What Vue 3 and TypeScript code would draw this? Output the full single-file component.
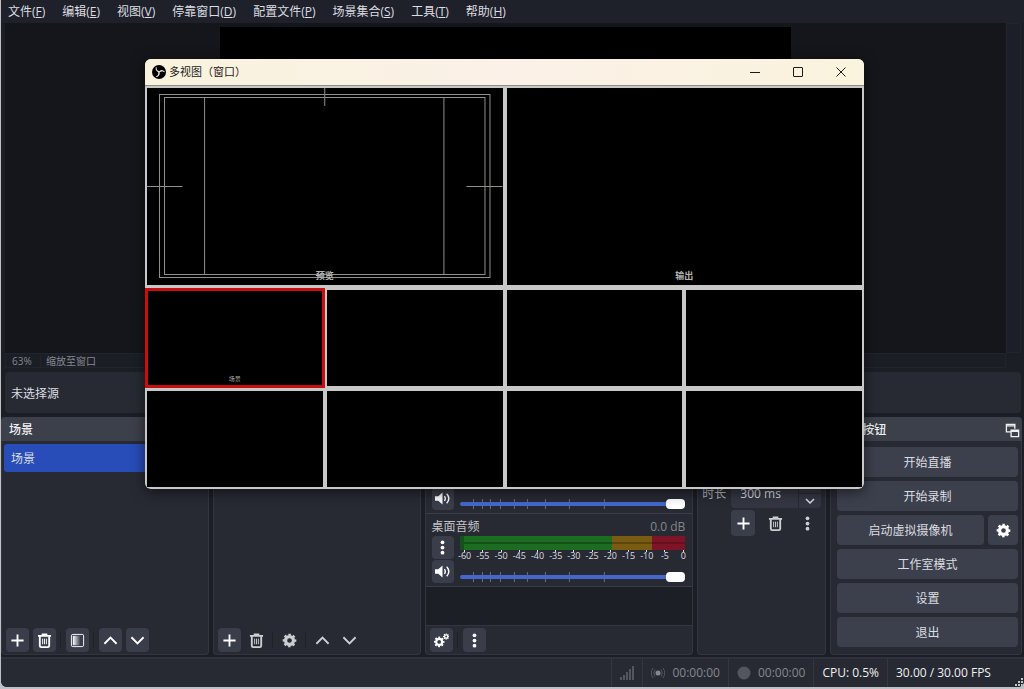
<script setup lang="ts">
import { ref } from 'vue'

interface Channel {
  id: string
  label: string
  full: boolean
}

const menus: [string, string][] = [
  ['文件', 'F'],
  ['编辑', 'E'],
  ['视图', 'V'],
  ['停靠窗口', 'D'],
  ['配置文件', 'P'],
  ['场景集合', 'S'],
  ['工具', 'T'],
  ['帮助', 'H'],
]

const channels: Channel[] = [
  { id: 'aux', label: '', full: false },
  { id: 'desktop', label: '桌面音频', full: true },
]

const scale = [-60, -55, -50, -45, -40, -35, -30, -25, -20, -15, -10, -5, 0]
const faderMarks = [13, 22, 30, 40, 54, 67, 85, 109, 144]
const volumes = ref<Record<string, number>>({ aux: 100, desktop: 100 })
const duration = ref('300 ms')
</script>

<template>
  <div class="desktop">
    <div class="app">
      <nav class="menubar">
        <button v-for="[name, key] in menus" :key="key" type="button">{{ name }}(<u>{{ key }}</u>)</button>
      </nav>

      <main class="preview">
        <div class="stage"><div class="canvas"></div></div>
        <div class="vscroll"></div>
      </main>
      <div class="zoombar">
        <span class="percent">63%</span>
        <select aria-label="缩放"><option>缩放至窗口</option></select>
      </div>

      <section class="sourcebar">未选择源</section>

      <div class="docks">
        <section class="dock">
          <h2>场景</h2>
          <div class="body">
            <ul class="scenes"><li>场景</li></ul>
            <div class="toolbar">
              <button type="button" aria-label="添加场景"><svg viewBox="0 0 16 16"><path d="M8 1.500v13M1.500 8h13" class="line" /></svg></button>
              <button type="button" aria-label="删除场景"><svg viewBox="0 0 16 16"><path d="M1 3h14M5 1.500h6M3 4v9.500q0 1.500 1.500 1.500h7q1.500 0 1.500-1.500V4" class="line" /><path d="M6 6v6M8 6v6M10 6v6" class="thin" /></svg></button>
              <i></i>
              <button type="button" aria-label="场景滤镜">
                <svg viewBox="0 0 16 16">
                  <defs><linearGradient id="fade"><stop offset="0" stop-color="#fff" /><stop offset="1" stop-color="#3c404d" /></linearGradient></defs>
                  <rect x="1.500" y="1.500" width="13" height="13" rx="1.500" class="thin" /><rect x="3" y="3" width="8" height="10" fill="url(#fade)" />
                </svg>
              </button>
              <i></i>
              <button type="button" aria-label="上移场景"><svg viewBox="0 0 16 16"><path d="M1.500 11.500L8 5l6.500 6.500" class="line" /></svg></button>
              <button type="button" aria-label="下移场景"><svg viewBox="0 0 16 16"><path d="M1.500 4.500L8 11l6.500-6.500" class="line" /></svg></button>
            </div>
          </div>
        </section>

        <section class="dock">
          <h2></h2>
          <div class="body">
            <div class="grow"></div>
            <div class="toolbar">
              <button type="button" aria-label="添加源"><svg viewBox="0 0 16 16"><path d="M8 1.500v13M1.500 8h13" class="line" /></svg></button>
              <button type="button" class="flat" aria-label="删除源"><svg viewBox="0 0 16 16"><path d="M1 3h14M5 1.500h6M3 4v9.500q0 1.500 1.500 1.500h7q1.500 0 1.500-1.500V4" class="line" /><path d="M6 6v6M8 6v6M10 6v6" class="thin" /></svg></button>
              <i></i>
              <button type="button" class="flat" aria-label="源属性"><svg viewBox="0 0 16 16"><circle cx="8" cy="8" r="4.200" class="ring" /><circle cx="8" cy="8" r="6" class="teeth" pathLength="16" /></svg></button>
              <i></i>
              <button type="button" class="flat" aria-label="上移源"><svg viewBox="0 0 16 16"><path d="M1.500 11.500L8 5l6.500 6.500" class="line" /></svg></button>
              <button type="button" class="flat" aria-label="下移源"><svg viewBox="0 0 16 16"><path d="M1.500 4.500L8 11l6.500-6.500" class="line" /></svg></button>
            </div>
          </div>
        </section>

        <section class="dock mixer">
          <h2></h2>
          <div class="body">
            <div v-for="c in channels" :key="c.id" class="channel">
              <template v-if="c.full">
                <div class="chead"><label :for="c.id">{{ c.label }}</label><span>0.0 dB</span></div>
                <div class="crow">
                  <button type="button" aria-label="音频选项"><svg viewBox="0 0 16 16"><circle cx="8" cy="2.500" r="2" /><circle cx="8" cy="8" r="2" /><circle cx="8" cy="13.500" r="2" /></svg></button>
                  <div class="meterbox">
                    <div class="meter"><b></b><b></b><b></b></div>
                    <div class="scale"><span v-for="n in scale" :key="n">{{ n }}</span></div>
                  </div>
                </div>
              </template>
              <div class="crow">
                <button type="button" aria-label="静音">
                  <svg viewBox="0 0 16 16"><path d="M0 5.500h3.500L8 1.500v13L3.500 10.500H0z" /><path d="M10 5.500q2 2.500 0 5M12.500 3q4.500 5 0 10" class="arc" /></svg>
                </button>
                <div class="fader">
                  <svg viewBox="0 0 226 10" preserveAspectRatio="none"><path v-for="m in faderMarks" :key="m" :d="`M${m + 0.5} 0v10`" /></svg>
                  <input :id="c.id" v-model="volumes[c.id]" type="range" min="0" max="100" aria-label="音量" />
                </div>
              </div>
            </div>
            <div class="empty"></div>
            <div class="toolbar">
              <button type="button" aria-label="高级音频属性">
                <svg viewBox="0 0 16 16">
                  <circle cx="5.500" cy="9.500" r="3.200" class="ring mid" /><circle cx="5.500" cy="9.500" r="4.500" class="teeth mid" pathLength="16" />
                  <circle cx="13" cy="3.800" r="1.800" class="ring small" /><circle cx="13" cy="3.800" r="2.600" class="teeth small" pathLength="16" />
                </svg>
              </button>
              <i></i>
              <button type="button" aria-label="混音器菜单"><svg viewBox="0 0 16 16"><circle cx="8" cy="2.500" r="2" /><circle cx="8" cy="8" r="2" /><circle cx="8" cy="13.500" r="2" /></svg></button>
            </div>
          </div>
        </section>

        <section class="dock">
          <h2></h2>
          <div class="body transitions">
            <div class="duration">
              <label for="duration">时长</label>
              <div class="spin">
                <input id="duration" v-model="duration" type="text" />
                <div class="steps">
                  <button type="button" aria-label="增加"></button>
                  <button type="button" aria-label="减少"><svg viewBox="0 0 10 10"><path d="M1 3l4 4 4-4" class="line" /></svg></button>
                </div>
              </div>
            </div>
            <div class="tools">
              <button type="button" aria-label="添加转场"><svg viewBox="0 0 16 16"><path d="M8 1.500v13M1.500 8h13" class="line" /></svg></button>
              <button type="button" class="flat" aria-label="删除转场"><svg viewBox="0 0 16 16"><path d="M1 3h14M5 1.500h6M3 4v9.500q0 1.500 1.500 1.500h7q1.500 0 1.500-1.500V4" class="line" /><path d="M6 6v6M8 6v6M10 6v6" class="thin" /></svg></button>
              <button type="button" class="flat" aria-label="转场菜单"><svg viewBox="0 0 16 16"><circle cx="8" cy="2.500" r="2" /><circle cx="8" cy="8" r="2" /><circle cx="8" cy="13.500" r="2" /></svg></button>
            </div>
          </div>
        </section>

        <section class="dock">
          <h2>
            控制按钮
            <button type="button" class="float" aria-label="浮动">
              <svg viewBox="0 0 16 16"><path d="M6 9.500H1.500v-8h9V6M1 3h10M6.500 7.500h8v7h-8zM6 9h9" class="line" /></svg>
            </button>
          </h2>
          <div class="body controls">
            <button type="button">开始直播</button>
            <button type="button">开始录制</button>
            <div class="pair">
              <button type="button">启动虚拟摄像机</button>
              <button type="button" class="cfg" aria-label="虚拟摄像机设置"><svg viewBox="0 0 16 16"><circle cx="8" cy="8" r="4.200" class="ring" /><circle cx="8" cy="8" r="6" class="teeth" pathLength="16" /></svg></button>
            </div>
            <button type="button">工作室模式</button>
            <button type="button">设置</button>
            <button type="button">退出</button>
          </div>
        </section>
      </div>

      <footer class="status">
        <div><svg class="dim" viewBox="0 0 14 14"><path d="M0 11h2v3H0zM3 9h2v5H3zM6 6h2v8H6zM9 3h2v11H9zM12 0h2v14h-2z" /></svg></div>
        <div class="off">
          <svg class="dim" viewBox="0 0 14 14"><circle cx="7" cy="7" r="2.500" fill="#85878e" /><path d="M4 3.500q-2.500 3.500 0 7M10 3.500q2.500 3.500 0 7M2 2q-3.500 5 0 10M12 2q3.500 5 0 10" class="wave" /></svg>
          00:00:00
        </div>
        <div class="off"><svg class="dim" viewBox="0 0 14 14"><circle cx="7" cy="7" r="6.500" /></svg>00:00:00</div>
        <div>CPU: 0.5%</div>
        <div class="fps">
          30.00 / 30.00 FPS
          <svg class="grip" viewBox="0 0 9 9"><path d="M7 1h2v2H7zM4 4h2v2H4zM7 4h2v2H7zM1 7h2v2H1zM4 7h2v2H4zM7 7h2v2H7z" /></svg>
        </div>
      </footer>
    </div>

    <section class="window" aria-label="多视图">
      <header>
        <svg class="logo" viewBox="0 0 28 28">
          <circle cx="14" cy="14" r="14" />
          <g v-for="a in [0, 120, 240]" :key="a" :transform="`rotate(${a} 14 14)`">
            <path d="M14 13Q7 12 8.500 4.500" />
            <path d="M8.500 9Q11 14.500 14 13" />
          </g>
        </svg>
        <h1>多视图（窗口）</h1>
        <button type="button" aria-label="最小化"><svg viewBox="0 0 10 10"><path d="M0 5.500h10" /></svg></button>
        <button type="button" aria-label="最大化"><svg viewBox="0 0 10 10"><rect x="0.500" y="0.500" width="9" height="9" rx="0.500" /></svg></button>
        <button type="button" aria-label="关闭"><svg viewBox="0 0 10 10"><path d="M0.500 0.500l9 9M9.500 0.500l-9 9" /></svg></button>
      </header>
      <div class="views">
        <div class="view big">
          <svg viewBox="0 0 355 197" preserveAspectRatio="none">
            <path d="M12.500 6.500h330v183h-330zM17.500 9.500h320v177h-320zM57.500 9.500v177M296.500 9.500v177M177.500 0v18M0 98.500h35.500M319 98.500h36" />
          </svg>
          <span>预览</span>
        </div>
        <div class="view big"><span>输出</span></div>
        <div class="view active"><span>场景</span></div>
        <div v-for="n in 7" :key="n" class="view"></div>
      </div>
    </section>
  </div>
</template>

<style>
html,
body,
#app {
  height: 100%;
}
body {
  margin: 0;
}
</style>

<style scoped>
* {
  box-sizing: border-box;
}
.desktop {
  position: relative;
  min-height: 100%;
  display: flex;
  padding: 0 0 2px 1px;
  background: #bfc0c6;
  color: #dcdde0;
  font: 12px/16px "Open Sans", "Noto Sans CJK SC", sans-serif;
}
button,
input,
select {
  font: inherit;
  color: inherit;
  border: 0;
  padding: 0;
  margin: 0;
  background: none;
}
h1,
h2,
ul {
  margin: 0;
  padding: 0;
  font-weight: 400;
  list-style: none;
}
.app {
  flex: 1;
  min-width: 0;
  display: flex;
  flex-direction: column;
  background: #1c1e26;
  border-radius: 0 0 6px 6px;
  overflow: hidden;
}
svg {
  display: block;
  fill: currentColor;
}
.line {
  fill: none;
  stroke: currentColor;
  stroke-width: 2;
}
.thin {
  fill: none;
  stroke: currentColor;
}
.arc {
  fill: none;
  stroke: currentColor;
  stroke-width: 1.5;
}
.ring {
  fill: none;
  stroke: currentColor;
  stroke-width: 3.4;
}
.teeth {
  fill: none;
  stroke: currentColor;
  stroke-width: 2.6;
  stroke-dasharray: 1.1 0.9;
  stroke-dashoffset: 0.5;
}
.ring.mid,
.teeth.mid {
  stroke-width: 2.4;
}
.ring.small,
.teeth.small {
  stroke-width: 1.5;
}

.menubar {
  display: flex;
  height: 23px;
  padding-left: 7px;
  gap: 17px;
  background: #1e212a;
  flex: none;
}
.menubar button {
  white-space: nowrap;
}
.preview {
  flex: 1;
  min-height: 0;
  display: flex;
  padding: 0 3px 0 4px;
}
.stage {
  flex: 1;
  padding: 4px 0;
  background: #15161b;
}
.canvas {
  width: 57%;
  height: 100%;
  margin-left: 21.5%;
  background: #000;
}
.vscroll {
  width: 15px;
  border: 1px solid #22242d;
  background: #1d1f28;
}
.zoombar {
  flex: none;
  display: flex;
  align-items: center;
  height: 15px;
  margin: 0 18px 4px 4px;
  padding-top: 1px;
  border: 1px solid #22242d;
  font-size: 10px;
  line-height: 13px;
  color: #85878e;
}
.percent {
  width: 35px;
  padding-left: 6px;
  border-right: 1px solid #22242d;
}
.zoombar select {
  appearance: none;
  padding-left: 5px;
}
.sourcebar {
  flex: none;
  height: 41px;
  margin: 0 3px 4px 4px;
  padding: 0 6px;
  border-radius: 4px;
  background: #272a33;
  line-height: 43px;
}

.docks {
  flex: none;
  display: grid;
  grid-template-columns: 208fr 208fr 269fr 129fr 192fr;
  gap: 4px;
  height: 238px;
  padding-right: 2px;
}
.dock {
  min-width: 0;
  display: flex;
  flex-direction: column;
}
.dock h2 {
  flex: none;
  display: flex;
  align-items: center;
  justify-content: space-between;
  height: 24px;
  padding: 2px 2px 0 8px;
  border-radius: 4px 4px 0 0;
  background: #3c404b;
  color: #f0f0f2;
  font-size: 12px;
  font-weight: 500;
}
.float svg {
  width: 15px;
  height: 15px;
}
.float .line {
  stroke-width: 1.4;
}
.body {
  flex: 1;
  min-height: 0;
  display: flex;
  flex-direction: column;
  border: 1px solid #333640;
  border-top: 0;
  border-radius: 0 0 4px 4px;
  background: #272a33;
}
.scenes {
  flex: 1;
  padding: 3px 2px;
}
.scenes li {
  height: 28px;
  padding: 1px 7px 0;
  border-radius: 3px;
  background: #284cb8;
  line-height: 28px;
}
.grow {
  flex: 1;
}
.toolbar {
  display: flex;
  gap: 4px;
  padding: 2px 4px;
  color: #fff;
}
.toolbar i {
  width: 2px;
  margin: 4px 0;
  border-left: 1px solid #1f2129;
}
.toolbar button,
.tools button,
.crow button {
  display: grid;
  place-items: center;
  width: 23px;
  height: 24px;
  border-radius: 4px;
  background: #3a3d4a;
  color: #fff;
}
.toolbar button svg,
.tools button svg,
.crow button svg {
  width: 15px;
  height: 15px;
}
.toolbar .flat,
.tools .flat {
  background: none;
  color: #cdced2;
}

.channel {
  flex: none;
  height: 73px;
  display: flex;
  flex-direction: column;
  justify-content: flex-end;
  gap: 1px;
  padding: 0 7px 3px 6px;
  border-bottom: 1px solid #3a3d47;
}
.chead {
  display: flex;
  justify-content: space-between;
  color: #c3c4c8;
}
.chead span {
  color: #85878e;
}
.crow {
  display: flex;
  gap: 6px;
}
.crow button {
  flex: none;
  width: 22px;
  height: 23px;
}
.meterbox {
  flex: 1;
  min-width: 0;
}
.meter {
  display: grid;
  grid-template-columns: 153fr 40fr 33fr;
  height: 14px;
}
.meter b {
  background: linear-gradient(#1c6c21 0 6px, #155019 6px 8px, #1c6c21 8px);
}
.meter b:first-child {
  border-left: 4px solid #174f1d;
}
.meter b:nth-child(2) {
  background: linear-gradient(#7a5b12 0 6px, #5c4510 6px 8px, #7a5b12 8px);
}
.meter b:nth-child(3) {
  background: linear-gradient(#7e1526 0 6px, #64101e 6px 8px, #7e1526 8px);
}
.scale {
  display: grid;
  grid-template-columns: repeat(13, 1fr);
  height: 9px;
  margin: 0 -7px 0 -4px;
  font-size: 9px;
  line-height: 8px;
  text-align: center;
}
.scale span::before {
  content: "";
  display: block;
  width: 1px;
  height: 2px;
  margin: 0 auto;
  background: #dcdde0;
}
.fader {
  position: relative;
  flex: 1;
  height: 10px;
  align-self: flex-end;
  margin-bottom: 1px;
}
.fader svg {
  position: absolute;
  inset: 0;
  width: 100%;
  height: 100%;
  stroke: #6a6d77;
}
.fader input {
  position: relative;
  display: block;
  width: 100%;
  height: 10px;
  appearance: none;
}
.fader input::-webkit-slider-runnable-track {
  height: 4px;
  border-radius: 2px;
  background: #4367cb;
}
.fader input::-webkit-slider-thumb {
  appearance: none;
  width: 19px;
  height: 10px;
  margin-top: -3px;
  border-radius: 4px;
  background: #fff;
}
.empty {
  flex: 1;
  background: #1d1f27;
  border-bottom: 1px solid #333640;
}

.transitions {
  padding: 39px 4px 0;
}
.duration {
  display: flex;
  align-items: center;
  gap: 5px;
  color: #b4b5ba;
}
.duration label {
  flex: none;
}
.spin {
  flex: 1;
  min-width: 0;
  display: flex;
  height: 28px;
  border-radius: 4px;
  background: #343743;
  color: #dcdde0;
}
.spin input {
  flex: 1;
  min-width: 0;
  padding-left: 9px;
}
.steps {
  width: 23px;
  display: grid;
  grid-template-rows: 13px 15px;
  border-left: 1px solid #272a33;
}
.steps button {
  display: grid;
  place-items: center;
}
.steps button + button {
  border-top: 1px solid #272a33;
}
.steps svg {
  width: 10px;
  height: 10px;
}
.steps .line {
  stroke-width: 1.5;
}
.tools {
  display: flex;
  gap: 8px;
  padding: 2px 0 0 29px;
}
.tools button {
  width: 24px;
  height: 26px;
}

.controls {
  gap: 4px;
  padding: 6px 3px 0 6px;
}
.controls button {
  height: 30px;
  padding-top: 2px;
  border-radius: 4px;
  background: #3c404d;
}
.pair {
  display: flex;
  gap: 4px;
}
.pair button {
  flex: 1;
}
.pair .cfg {
  flex: none;
  display: grid;
  place-items: center;
  width: 30px;
  padding: 0;
  color: #fff;
}
.cfg svg {
  width: 15px;
  height: 15px;
}

.status {
  flex: none;
  display: flex;
  justify-content: flex-end;
  height: 30px;
  margin-top: 2px;
  border-top: 2px solid #2f323c;
  background: #272a33;
  color: #f0f0f2;
}
.status div {
  display: flex;
  align-items: center;
  gap: 7px;
  padding: 0 8px;
  border-left: 1px solid #343741;
  white-space: nowrap;
}
.status .off {
  color: #85878e;
}
.dim {
  width: 14px;
  height: 14px;
  color: #53565f;
}
.wave {
  fill: none;
  stroke: currentColor;
}
.status .fps {
  position: relative;
  width: 137px;
}
.grip {
  position: absolute;
  right: 1px;
  bottom: 1px;
  width: 9px;
  height: 9px;
  color: #c4c5c9;
}

.window {
  position: absolute;
  left: 145px;
  right: 160px;
  top: 59px;
  border-radius: 6px;
  background: #c8c8c8;
  box-shadow: 0 3px 14px rgba(0, 0, 0, 0.55);
  overflow: hidden;
}
.window header {
  display: flex;
  align-items: center;
  height: 27px;
  padding: 0 2px 0 7px;
  border-bottom: 1px solid #8d8e84;
  background: linear-gradient(90deg, #f9f3dd, #fbf1e8 50%, #faf3dd);
  color: #1a1a1a;
}
.logo {
  width: 14px;
  height: 14px;
  margin-right: 3px;
  fill: #000;
}
.logo path {
  fill: none;
  stroke: #e8e4da;
  stroke-width: 2;
}
.window h1 {
  flex: 1;
  font-size: 11px;
}
.window header button {
  display: grid;
  place-items: center;
  width: 43px;
  height: 26px;
}
.window header button svg {
  width: 10px;
  height: 10px;
  fill: none;
  stroke: #1a1a1a;
}
.views {
  display: grid;
  grid-template-columns: repeat(4, 1fr);
  grid-template-rows: 197px 96px 96px;
  gap: 5px 4px;
  padding: 2px;
}
.view {
  position: relative;
  display: flex;
  align-items: flex-end;
  justify-content: center;
  background: #000;
  color: #aaa;
  font-size: 6px;
  line-height: 8px;
  padding-bottom: 3px;
}
.view.big {
  grid-column: span 2;
  font-size: 9px;
  font-weight: 700;
  line-height: 12px;
  color: #b4b4b4;
}
.view svg {
  position: absolute;
  inset: 0;
  width: 100%;
  height: 100%;
  fill: none;
  stroke: #8f8f8c;
}
.view span {
  position: relative;
}
.view.active {
  box-shadow: 0 0 0 2px #c80f10, inset 0 0 0 1px #c80f10;
}
</style>
